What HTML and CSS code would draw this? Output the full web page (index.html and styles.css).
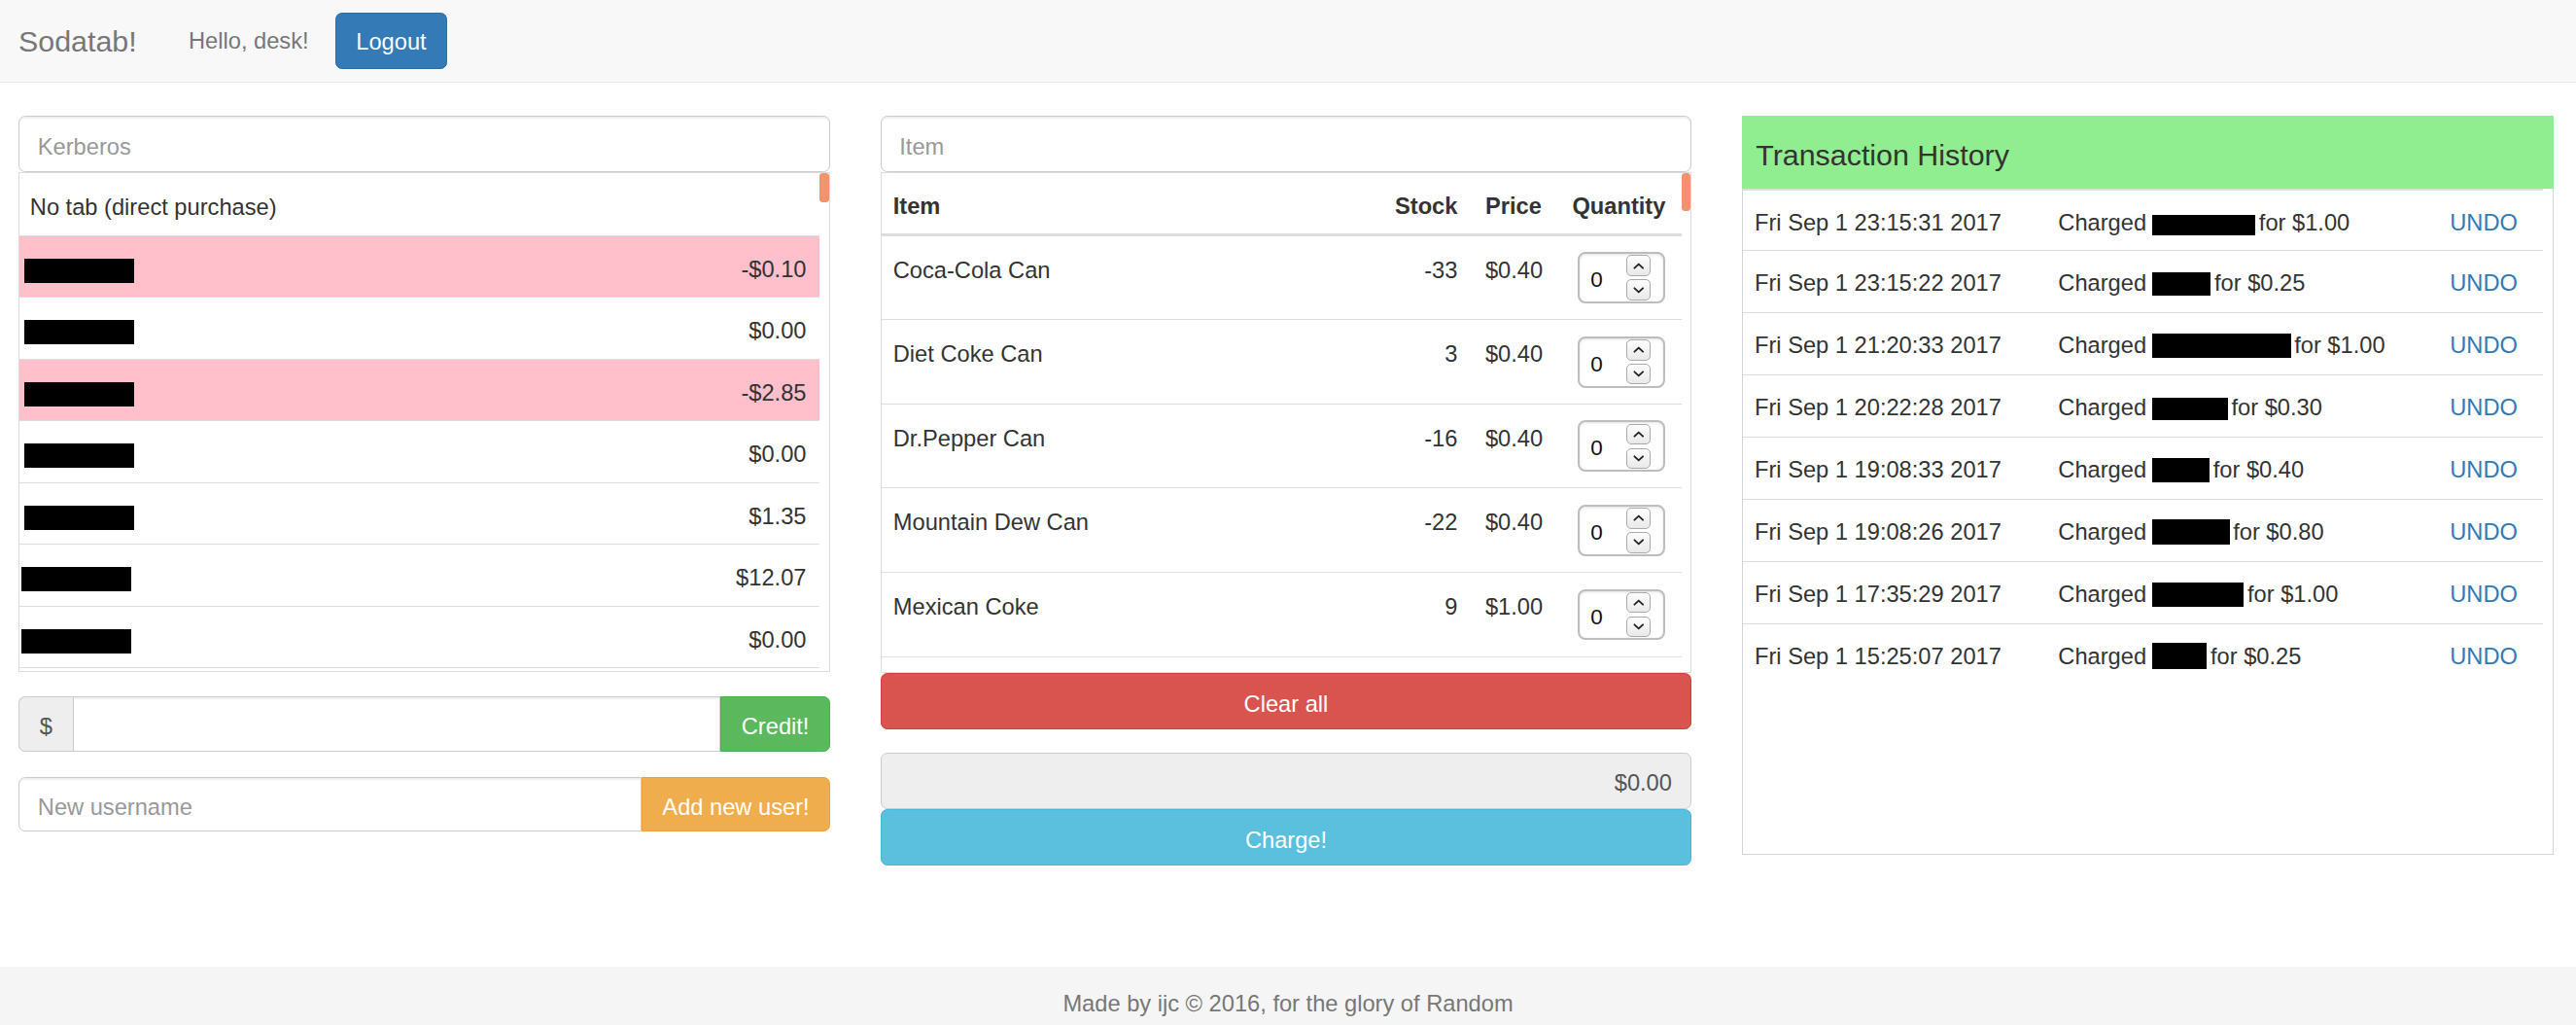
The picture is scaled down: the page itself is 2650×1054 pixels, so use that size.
FILE: index.html
```html
<!DOCTYPE html>
<html lang="en">
<head>
<meta charset="utf-8">
<title>Sodatab!</title>
<link rel="stylesheet" href="styles.css">
</head>
<body>
<div class="page">
  <nav class="navbar">
    <a class="brand" href="#">Sodatab!</a>
    <span class="navbar-text">Hello, desk!</span>
    <button class="btn btn-primary btn-logout" type="button">Logout</button>
  </nav>

  <main class="main">
    <section class="col">
      <input class="form-control search" type="text" placeholder="Kerberos">
      <div class="scrollbox userlist">
        <div class="scroll-content">
          <div class="user-row"><span>No tab (direct purchase)</span></div>
          <div class="user-row debt"><span class="redact redact-user"></span><span>-$0.10</span></div>
          <div class="user-row"><span class="redact redact-user"></span><span>$0.00</span></div>
          <div class="user-row debt"><span class="redact redact-user"></span><span>-$2.85</span></div>
          <div class="user-row"><span class="redact redact-user"></span><span>$0.00</span></div>
          <div class="user-row"><span class="redact redact-user"></span><span>$1.35</span></div>
          <div class="user-row"><span class="redact redact-user shift"></span><span>$12.07</span></div>
          <div class="user-row"><span class="redact redact-user shift"></span><span>$0.00</span></div>
        </div>
        <div class="scroll-track"><div class="scroll-thumb thumb-users"></div></div>
      </div>

      <div class="input-group credit-group">
        <span class="addon">$</span>
        <input class="form-control" type="text">
        <button class="btn btn-success" type="button">Credit!</button>
      </div>

      <div class="input-group adduser-group">
        <input class="form-control" type="text" placeholder="New username">
        <button class="btn btn-warning" type="button">Add new user!</button>
      </div>
    </section>

    <section class="col">
      <input class="form-control search" type="text" placeholder="Item">
      <div class="scrollbox itembox">
        <div class="scroll-content">
          <div class="item-head">
            <span class="cell c-item">Item</span>
            <span class="cell c-stock">Stock</span>
            <span class="cell c-price">Price</span>
            <span class="cell c-qty">Quantity</span>
          </div>
          <div class="item-row">
            <span class="cell c-item">Coca-Cola Can</span>
            <span class="cell c-stock">-33</span>
            <span class="cell c-price">$0.40</span>
            <span class="cell c-qty"><span class="qty"><span class="qty-value">0</span><span class="spin"><span class="spin-btn"><svg viewBox="0 0 12 7"><path d="M1.5 5.8 L6 1.5 L10.5 5.8"/></svg></span><span class="spin-btn"><svg viewBox="0 0 12 7"><path d="M1.5 1.2 L6 5.5 L10.5 1.2"/></svg></span></span></span></span>
          </div>
          <div class="item-row">
            <span class="cell c-item">Diet Coke Can</span>
            <span class="cell c-stock">3</span>
            <span class="cell c-price">$0.40</span>
            <span class="cell c-qty"><span class="qty"><span class="qty-value">0</span><span class="spin"><span class="spin-btn"><svg viewBox="0 0 12 7"><path d="M1.5 5.8 L6 1.5 L10.5 5.8"/></svg></span><span class="spin-btn"><svg viewBox="0 0 12 7"><path d="M1.5 1.2 L6 5.5 L10.5 1.2"/></svg></span></span></span></span>
          </div>
          <div class="item-row">
            <span class="cell c-item">Dr.Pepper Can</span>
            <span class="cell c-stock">-16</span>
            <span class="cell c-price">$0.40</span>
            <span class="cell c-qty"><span class="qty"><span class="qty-value">0</span><span class="spin"><span class="spin-btn"><svg viewBox="0 0 12 7"><path d="M1.5 5.8 L6 1.5 L10.5 5.8"/></svg></span><span class="spin-btn"><svg viewBox="0 0 12 7"><path d="M1.5 1.2 L6 5.5 L10.5 1.2"/></svg></span></span></span></span>
          </div>
          <div class="item-row">
            <span class="cell c-item">Mountain Dew Can</span>
            <span class="cell c-stock">-22</span>
            <span class="cell c-price">$0.40</span>
            <span class="cell c-qty"><span class="qty"><span class="qty-value">0</span><span class="spin"><span class="spin-btn"><svg viewBox="0 0 12 7"><path d="M1.5 5.8 L6 1.5 L10.5 5.8"/></svg></span><span class="spin-btn"><svg viewBox="0 0 12 7"><path d="M1.5 1.2 L6 5.5 L10.5 1.2"/></svg></span></span></span></span>
          </div>
          <div class="item-row">
            <span class="cell c-item">Mexican Coke</span>
            <span class="cell c-stock">9</span>
            <span class="cell c-price">$1.00</span>
            <span class="cell c-qty"><span class="qty"><span class="qty-value">0</span><span class="spin"><span class="spin-btn"><svg viewBox="0 0 12 7"><path d="M1.5 5.8 L6 1.5 L10.5 5.8"/></svg></span><span class="spin-btn"><svg viewBox="0 0 12 7"><path d="M1.5 1.2 L6 5.5 L10.5 1.2"/></svg></span></span></span></span>
          </div>
        </div>
        <div class="scroll-track"><div class="scroll-thumb thumb-items"></div></div>
      </div>
      <button class="btn btn-danger btn-block" type="button">Clear all</button>
      <div class="total">$0.00</div>
      <button class="btn btn-info btn-block btn-charge" type="button">Charge!</button>
    </section>

    <section class="col">
      <div class="history">
        <div class="history-head">Transaction History</div>
        <div class="history-body">
          <div class="history-table">
            <div class="h-row"><span>Fri Sep 1 23:15:31 2017</span><span>Charged <span class="redact redact-h" style="width:106.7px;height:20.3px"></span>for $1.00</span><span><a class="undo" href="#">UNDO</a></span></div>
            <div class="h-row"><span>Fri Sep 1 23:15:22 2017</span><span>Charged <span class="redact redact-h" style="width:60.8px;height:23.4px"></span>for $0.25</span><span><a class="undo" href="#">UNDO</a></span></div>
            <div class="h-row"><span>Fri Sep 1 21:20:33 2017</span><span>Charged <span class="redact redact-h" style="width:143px;height:24.6px"></span>for $1.00</span><span><a class="undo" href="#">UNDO</a></span></div>
            <div class="h-row"><span>Fri Sep 1 20:22:28 2017</span><span>Charged <span class="redact redact-h" style="width:78.3px;height:22.9px"></span>for $0.30</span><span><a class="undo" href="#">UNDO</a></span></div>
            <div class="h-row"><span>Fri Sep 1 19:08:33 2017</span><span>Charged <span class="redact redact-h" style="width:59.6px;height:24.4px"></span>for $0.40</span><span><a class="undo" href="#">UNDO</a></span></div>
            <div class="h-row"><span>Fri Sep 1 19:08:26 2017</span><span>Charged <span class="redact redact-h" style="width:80px;height:25.3px"></span>for $0.80</span><span><a class="undo" href="#">UNDO</a></span></div>
            <div class="h-row"><span>Fri Sep 1 17:35:29 2017</span><span>Charged <span class="redact redact-h" style="width:94.8px;height:24.8px"></span>for $1.00</span><span><a class="undo" href="#">UNDO</a></span></div>
            <div class="h-row"><span>Fri Sep 1 15:25:07 2017</span><span>Charged <span class="redact redact-h" style="width:56.8px;height:26.4px"></span>for $0.25</span><span><a class="undo" href="#">UNDO</a></span></div>
          </div>
          <div class="history-gutter"></div>
        </div>
      </div>
    </section>
  </main>

  <footer class="footer">Made by ijc © 2016, for the glory of Random</footer>
</div>
</body>
</html>
```

FILE: styles.css
```css
* {
  box-sizing: border-box;
}

html,
body {
  margin: 0;
  height: 100%;
}

body {
  font-family: "Liberation Sans", Arial, Helvetica, sans-serif;
  font-size: 23.66px;
  line-height: 33.8px;
  color: #333;
  background: #fff;
  overflow: hidden;
}

.page {
  min-height: 100%;
  display: flex;
  flex-direction: column;
}

/* ---------- navbar ---------- */
.navbar {
  flex: none;
  height: 84.5px;
  display: flex;
  align-items: center;
  padding-left: 19px;
  background: #f8f8f8;
  border-bottom: 1.7px solid #e7e7e7;
}

.brand {
  font-size: 30.4px;
  line-height: 33.8px;
  color: #777;
  text-decoration: none;
  padding-top: 2.4px;
}

.navbar-text {
  color: #777;
  margin-left: 53.3px;
  padding-top: 2.4px;
}

.btn-logout {
  margin-left: 27.4px;
  height: 57.5px;
}

/* ---------- buttons ---------- */
.btn {
  display: flex;
  align-items: center;
  justify-content: center;
  height: 57.5px;
  padding: 7.4px 20.3px 0;
  font-family: inherit;
  font-size: 23.66px;
  line-height: 33.8px;
  color: #fff;
  border: 1.7px solid transparent;
  border-radius: 6.8px;
  white-space: nowrap;
  cursor: pointer;
}

.btn-primary { background: #337ab7; border-color: #2e6da4; }
.btn-success { background: #5cb85c; border-color: #4cae4c; }
.btn-warning { background: #f0ad4e; border-color: #eea236; }
.btn-danger { background: #d9534f; border-color: #d43f3a; }
.btn-info { background: #5bc0de; border-color: #46b8da; }

.btn-logout {
  padding-top: 4.4px;
}

.btn-block {
  width: 100%;
  height: 58.3px;
}

/* ---------- form controls ---------- */
.form-control {
  display: block;
  width: 100%;
  height: 57.5px;
  padding: 6.4px 18.5px 0;
  font-family: inherit;
  font-size: 23.66px;
  color: #555;
  background: #fff;
  border: 1.7px solid #ccc;
  border-radius: 6.8px;
  box-shadow: inset 0 1.7px 1.7px rgba(0, 0, 0, 0.075);
  outline: none;
}

.form-control::placeholder {
  color: #999;
}

/* ---------- layout ---------- */
.main {
  flex: 1;
  display: grid;
  grid-template-columns: repeat(3, 1fr);
  column-gap: 52px;
  align-items: start;
  padding: 34.8px 23.3px 0 19.3px;
}

.col {
  min-width: 0;
}

/* ---------- scroll boxes ---------- */
.scrollbox {
  display: flex;
  border: 1.7px solid #ddd;
  overflow: hidden;
}

.scroll-content {
  flex: 1;
  min-width: 0;
  overflow: hidden;
}

.scroll-track {
  flex: none;
  width: 9.3px;
}

.scroll-thumb {
  background: #f3926e;
  border-radius: 3.4px;
}

.thumb-users { height: 30px; }
.thumb-items { height: 39px; }

/* ---------- user list ---------- */
.userlist {
  height: 514.2px;
}

.user-row {
  display: flex;
  justify-content: space-between;
  align-items: flex-start;
  height: 63.5px;
  padding: 17.7px 14px 0 10.5px;
  border-bottom: 1.7px solid #ddd;
  white-space: nowrap;
}

.user-row:first-child {
  height: 65.2px;
  padding-top: 19.4px;
}

.user-row.debt {
  background: #ffc0cb;
}

.redact {
  display: inline-block;
  background: #000;
}

.redact-user {
  width: 113px;
  height: 24.7px;
  margin: 5.3px 0 0 -5.5px;
}

.redact-user.shift {
  margin-left: -8.5px;
  width: 112.8px;
}

/* ---------- input groups ---------- */
.input-group {
  display: flex;
}

.input-group .form-control {
  flex: 1 1 0;
  min-width: 0;
  height: auto;
  border-radius: 0;
}

.input-group .btn {
  flex: none;
  height: auto;
  border-radius: 0 6.8px 6.8px 0;
}

.credit-group {
  height: 56.4px;
  margin-top: 25.3px;
}

.credit-group .btn {
  width: 112.3px;
}

.addon {
  flex: none;
  width: 55.3px;
  display: flex;
  align-items: center;
  justify-content: center;
  padding-top: 7.4px;
  color: #555;
  background: #eee;
  border: 1.7px solid #ccc;
  border-right: 0;
  border-radius: 6.8px 0 0 6.8px;
}

.adduser-group {
  height: 55.4px;
  margin-top: 26.6px;
}

.adduser-group .form-control {
  border-radius: 6.8px 0 0 6.8px;
}

.adduser-group .btn {
  width: 193.6px;
}

/* ---------- item table ---------- */
.itembox {
  height: 514.9px;
}

.item-head,
.item-row {
  display: grid;
  grid-template-columns: 1fr 92px 93px 125px;
  white-space: nowrap;
}

.item-head {
  height: 64.9px;
  font-weight: bold;
  border-bottom: 3.4px solid #ddd;
}

.item-head .cell {
  padding-top: 18px;
}

.item-row {
  height: 86.6px;
  border-bottom: 1.7px solid #ddd;
}

.item-row:first-of-type {
  height: 87.6px;
}

.item-row .cell {
  padding-top: 19px;
}

.c-item { padding-left: 12px; }
.c-stock { text-align: right; padding-right: 12.5px; }
.c-price { padding-left: 16px; }
.c-qty { padding-left: 12.5px; }

.item-row .c-qty {
  padding-top: 16.6px;
  padding-left: 17.7px;
}

.qty {
  display: flex;
  align-items: center;
  width: 90.6px;
  height: 52.7px;
  background: #fff;
  border: 2px solid #bdbdbd;
  border-radius: 8px;
  box-shadow: inset 0 1px 3px rgba(0, 0, 0, 0.12);
}

.qty-value {
  flex: 1;
  padding: 5px 0 0 11.6px;
  font-size: 22.5px;
  color: #111;
}

.spin {
  display: flex;
  flex-direction: column;
  gap: 3.4px;
  margin-right: 13px;
}

.spin-btn {
  display: flex;
  align-items: center;
  justify-content: center;
  width: 25px;
  height: 21.5px;
  border: 1.5px solid #aaa;
  border-radius: 5px;
  background: linear-gradient(#fdfdfd, #e9e9e9);
}

.spin-btn svg {
  width: 11.5px;
  height: 7px;
  fill: none;
  stroke: #222;
  stroke-width: 1.9;
  stroke-linecap: round;
  stroke-linejoin: round;
}

.total {
  height: 57.7px;
  margin-top: 24px;
  padding: 14.5px 19.3px 0;
  text-align: right;
  color: #555;
  background: #eee;
  border: 1.7px solid #ccc;
  border-radius: 6.8px;
}

/* ---------- history ---------- */
.history-head {
  display: flex;
  align-items: center;
  height: 74.7px;
  padding: 6.6px 0 0 14px;
  font-size: 30.4px;
  background: #90ee90;
}

.history-body {
  display: flex;
  height: 685.3px;
  border: 1.7px solid #d4d4d4;
  border-top: 0;
}

.history-table {
  flex: 1;
  min-width: 0;
  border-top: 2.6px solid #ddd;
}

.history-gutter {
  flex: none;
  width: 9.3px;
}

.h-row {
  display: grid;
  grid-template-columns: 312.3px 402.9px 1fr;
  height: 64px;
  padding-top: 17.1px;
  border-top: 1.7px solid #ddd;
  white-space: nowrap;
}

.h-row:first-child {
  height: 61.2px;
  padding-top: 17.3px;
  border-top: 0;
}

.h-row > span {
  padding-left: 11.8px;
}

.redact-h {
  margin: 0 3.5px 0 -1px;
  vertical-align: -4.5px;
}

.undo {
  color: #337ab7;
  text-decoration: none;
}

/* ---------- footer ---------- */
.footer {
  flex: none;
  height: 60px;
  padding-top: 21.6px;
  text-align: center;
  color: #777;
  background: #f5f5f5;
}
```
